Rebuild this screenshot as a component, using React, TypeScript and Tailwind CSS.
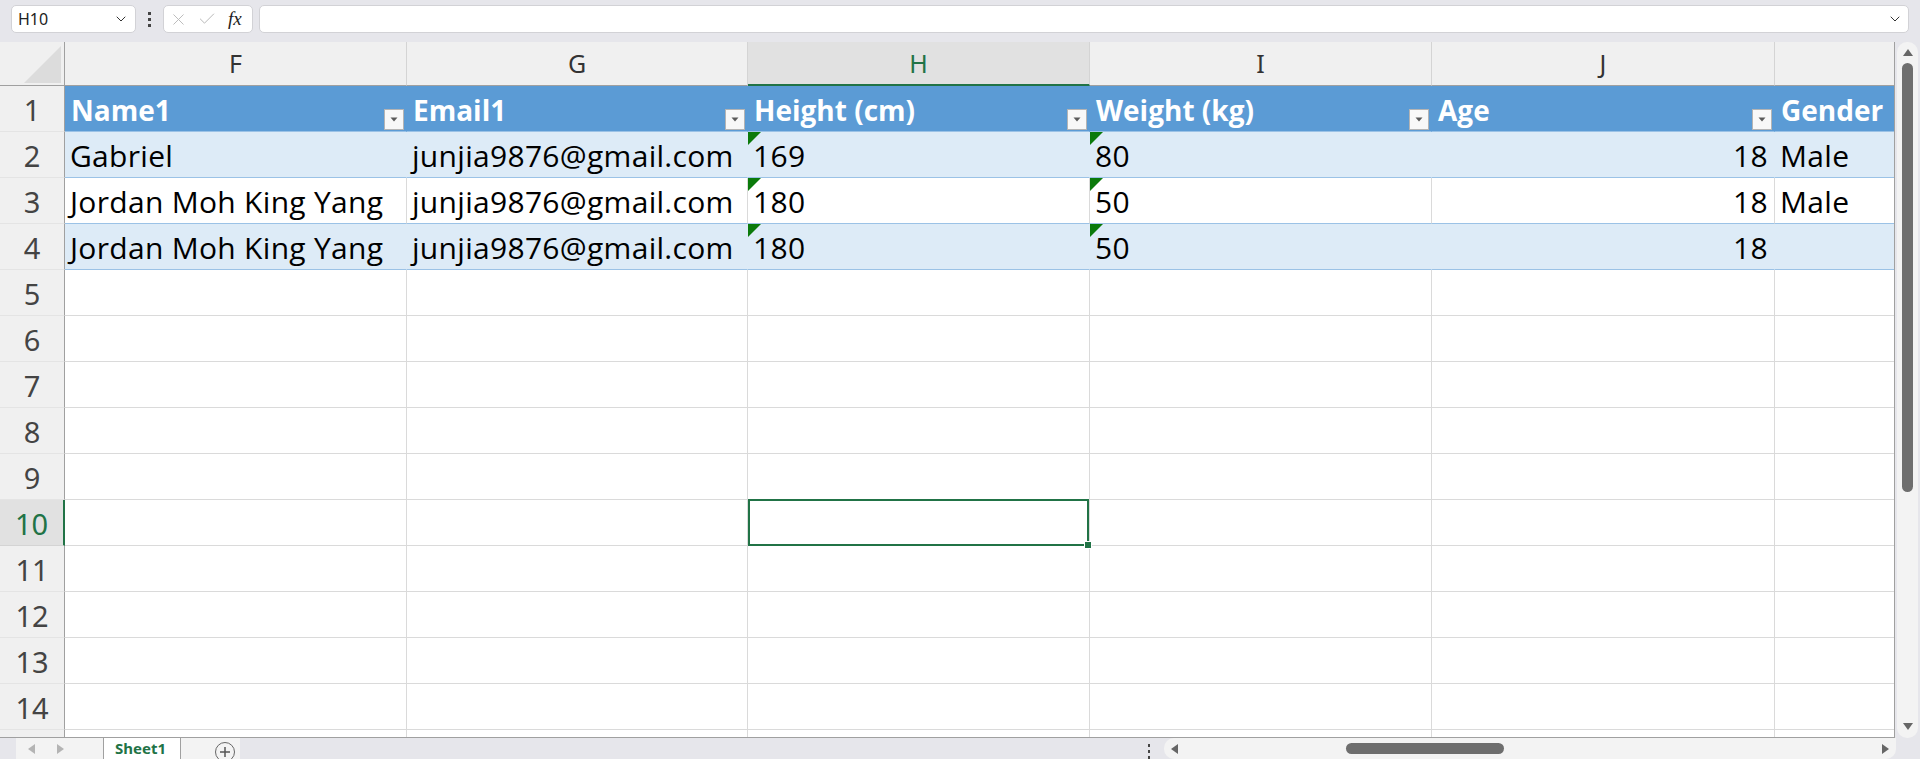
import { ChevronDown, X, Check } from "lucide-react";

type Cell = { v: string; right?: boolean; flag?: boolean };

const COLS = ["F", "G", "H", "I", "J", "K"];
const HEADERS = ["Name1", "Email1", "Height (cm)", "Weight (kg)", "Age", "Gender"];

const DATA: Cell[][] = [
  [
    { v: "Gabriel" },
    { v: "junjia9876@gmail.com" },
    { v: "169", flag: true },
    { v: "80", flag: true },
    { v: "18", right: true },
    { v: "Male" },
  ],
  [
    { v: "Jordan Moh King Yang" },
    { v: "junjia9876@gmail.com" },
    { v: "180", flag: true },
    { v: "50", flag: true },
    { v: "18", right: true },
    { v: "Male" },
  ],
  [
    { v: "Jordan Moh King Yang" },
    { v: "junjia9876@gmail.com" },
    { v: "180", flag: true },
    { v: "50", flag: true },
    { v: "18", right: true },
    { v: "" },
  ],
];

const ROWS = Array.from({ length: 15 }, (_, i) => i + 1);

function FilterButton() {
  return (
    <div className="absolute right-[2px] bottom-[1px] flex h-[21px] w-[20px] items-center justify-center border border-[#b4b4b4] bg-[#f8f8f8]">
      <svg width="8" height="5" viewBox="0 0 8 5">
        <path d="M0.5 0.5h7L4 4.5z" fill="#5a5a5a" />
      </svg>
    </div>
  );
}

function Flag() {
  return (
    <svg className="absolute left-0 top-0" width="13" height="13" viewBox="0 0 13 13">
      <path d="M0 0h13L0 13z" fill="#0b7a0b" />
    </svg>
  );
}

function Tri({ dir, color = "#666" }: { dir: "up" | "down" | "left" | "right"; color?: string }) {
  const d = {
    up: "M0 7L5 0l5 7z",
    down: "M0 0h10L5 7z",
    left: "M7 0v10L0 5z",
    right: "M0 0v10l7-5z",
  }[dir];
  const horiz = dir === "left" || dir === "right";
  return (
    <svg width={horiz ? 7 : 10} height={horiz ? 10 : 7} viewBox={horiz ? "0 0 7 10" : "0 0 10 7"}>
      <path d={d} fill={color} />
    </svg>
  );
}

function Dots() {
  return (
    <div className="flex flex-col gap-[3px]">
      <div className="h-[3px] w-[3px] bg-[#444]" />
      <div className="h-[3px] w-[3px] bg-[#444]" />
      <div className="h-[3px] w-[3px] bg-[#444]" />
    </div>
  );
}

function FormulaBar() {
  return (
    <div className="flex h-[42px] items-start bg-[#e6e6eb] pt-[5px] pl-[11px]">
      <div className="flex h-[28px] w-[125px] items-center justify-between rounded-[5px] border border-[#d2d2d6] bg-white pl-[6px] pr-[6px] text-[16px] text-[#222]">
        <span>H10</span>
        <ChevronDown size={16} strokeWidth={1.5} color="#333" />
      </div>
      <div className="flex h-[28px] w-[27px] items-center justify-center">
        <Dots />
      </div>
      <div className="flex h-[28px] w-[90px] items-center rounded-[5px] border border-[#d2d2d6] bg-white pl-[5px]">
        <X size={19} strokeWidth={1.2} color="#b9b9b9" />
        <Check size={20} strokeWidth={1.2} color="#b9b9b9" className="ml-[9px]" />
        <span className="ml-[11px] font-['Liberation_Serif',serif] text-[19px] italic text-[#222]">fx</span>
      </div>
      <div className="ml-[6px] flex h-[28px] w-[1650px] items-center justify-end rounded-[5px] border border-[#d2d2d6] bg-white pr-[5px]">
        <ChevronDown size={16} strokeWidth={1.5} color="#333" />
      </div>
    </div>
  );
}

function ColumnHeaders() {
  return (
    <>
      <div className="relative border-r border-b border-r-[#a0a0a0] border-b-[#a0a0a0] bg-[#f0f0f0]">
        <svg className="absolute right-[3px] bottom-[2px]" width="37" height="37" viewBox="0 0 37 37">
          <path d="M37 0v37H0z" fill="#dcdcdc" />
        </svg>
      </div>
      {COLS.map((c) =>
        c === "H" ? (
          <div
            key={c}
            className="flex items-center justify-center border-r border-b-2 border-r-[#d4d4d4] border-b-[#217346] bg-[#e1e1e1] pt-[2px] text-[25px] text-[#217346]"
          >
            {c}
          </div>
        ) : c === "K" ? (
          <div key={c} className="border-b border-b-[#a0a0a0] bg-[#f0f0f0]" />
        ) : (
          <div
            key={c}
            className="flex items-center justify-center border-r border-b border-r-[#d4d4d4] border-b-[#a0a0a0] bg-[#f0f0f0] text-[25px] text-[#333]"
          >
            {c}
          </div>
        )
      )}
    </>
  );
}

function RowHeader({ n }: { n: number }) {
  const sel = n === 10;
  return (
    <div
      className={
        "flex items-center justify-center border-b pt-[2px] text-[29px] leading-none " +
        (sel
          ? "border-r-2 border-r-[#217346] border-b-[#d4d4d4] bg-[#e1e1e1] text-[#217346]"
          : "border-r border-r-[#a0a0a0] border-b-[#e4e4e4] bg-[#f0f0f0] text-[#444]")
      }
    >
      {n < 15 ? n : ""}
    </div>
  );
}

function DataCell({ row, col }: { row: number; col: number }) {
  const last = col === 5;
  if (row === 1) {
    return (
      <div
        className={
          "relative overflow-hidden whitespace-nowrap border-b border-b-[#9bc2e6] bg-[#5b9bd5] pt-[3px] pl-[6px] text-[28px] font-bold leading-[42px] text-white " +
          (last ? "" : "border-r border-r-[#5b9bd5]")
        }
      >
        {HEADERS[col]}
        {!last && <FilterButton />}
      </div>
    );
  }
  if (row <= 4) {
    const cell = DATA[row - 2][col];
    const band = row % 2 === 0;
    return (
      <div
        className={
          "relative overflow-hidden whitespace-nowrap border-b border-b-[#9bc2e6] pt-[3px] text-[30px] leading-[42px] tracking-[0.3px] text-black " +
          (band ? "bg-[#ddebf7] " : "bg-white ") +
          (last ? "" : band ? "border-r border-r-[#ddebf7] " : "border-r border-r-[#dadada] ") +
          (cell.right ? "pr-[6px] text-right" : "pl-[5px]")
        }
      >
        {cell.flag && <Flag />}
        {cell.v}
      </div>
    );
  }
  const selected = row === 10 && col === 2;
  return (
    <div
      className={
        "relative border-b border-b-[#dadada] bg-white " + (last ? "" : "border-r border-r-[#dadada]")
      }
    >
      {selected && (
        <div className="absolute -top-[1px] left-0 right-0 bottom-[-1px] z-10 border-2 border-[#217346]">
          <div className="absolute -right-[4px] -bottom-[4px] h-[6px] w-[6px] bg-[#217346] outline outline-1 outline-white" />
        </div>
      )}
    </div>
  );
}

function Sheet() {
  return (
    <div className="h-[696px] w-[1895px] overflow-hidden border-r border-b border-[#a0a0a0] bg-white">
      <div className="grid grid-cols-[65px_342px_341px_342px_342px_343px_119px] grid-rows-[44px_repeat(15,46px)] font-['Open_Sans',sans-serif]">
        <div className="contents font-['Noto_Sans',sans-serif]">
          <ColumnHeaders />
        </div>
        {ROWS.map((r) => (
          <div key={r} className="contents">
            <div className="contents font-['Noto_Sans',sans-serif]">
              <RowHeader n={r} />
            </div>
            {COLS.map((c, ci) => (
              <DataCell key={c} row={r} col={ci} />
            ))}
          </div>
        ))}
      </div>
    </div>
  );
}

function VScroll() {
  return (
    <div className="h-[696px] w-[25px] bg-[#e6e6eb] pl-[2px] pr-[2px]">
      <div className="flex h-full flex-col items-center rounded-b-[10px] rounded-t-[10px] bg-[#f3f3f3] pt-[7px]">
        <Tri dir="up" />
        <div className="mt-[7px] h-[429px] w-[11px] rounded-full bg-[#6e6e6e]" />
        <div className="flex-1" />
        <div className="mb-[8px]">
          <Tri dir="down" />
        </div>
      </div>
    </div>
  );
}

function TabBar() {
  return (
    <div className="flex h-[21px] items-stretch bg-[#e6e6eb] font-['Noto_Sans',sans-serif]">
      <div className="w-[16px]" />
      <div className="flex w-[87px] items-center bg-[#f3f3f3] pl-[12px]">
        <Tri dir="left" color="#b4b4b4" />
        <div className="ml-[22px]">
          <Tri dir="right" color="#b4b4b4" />
        </div>
      </div>
      <div className="flex w-[78px] items-center border-x border-[#a0a0a0] bg-white pl-[11px] text-[15px] font-bold leading-none text-[#217346]">
        Sheet1
      </div>
      <div className="relative w-[59px] overflow-hidden bg-[#f3f3f3]">
        <div className="absolute left-[34px] top-[4px] flex h-[20px] w-[20px] items-center justify-center rounded-full border-[1.5px] border-[#666]">
          <svg width="10" height="10" viewBox="0 0 10 10">
            <path d="M5 0v10M0 5h10" stroke="#555" strokeWidth="1.5" />
          </svg>
        </div>
      </div>
      <div className="flex w-[910px] items-center justify-end">
        <div className="mt-[6px] flex flex-col gap-[3px]">
          <div className="h-[3px] w-[2px] bg-[#444]" />
          <div className="h-[3px] w-[2px] bg-[#444]" />
          <div className="h-[3px] w-[2px] bg-[#444]" />
        </div>
      </div>
      <div className="ml-[14px] flex w-[732px] items-center rounded-bl-[10px] rounded-tl-[10px] rounded-br-[10px] bg-[#f3f3f3] pl-[7px] pr-[7px]">
        <Tri dir="left" />
        <div className="ml-[168px] h-[11px] w-[158px] rounded-full bg-[#6e6e6e]" />
        <div className="flex-1" />
        <Tri dir="right" />
      </div>
    </div>
  );
}

export default function App() {
  return (
    <div className="h-[759px] w-[1920px] overflow-hidden bg-[#e6e6eb] font-['Noto_Sans',sans-serif]">
      <FormulaBar />
      <div className="flex">
        <Sheet />
        <VScroll />
      </div>
      <TabBar />
    </div>
  );
}
